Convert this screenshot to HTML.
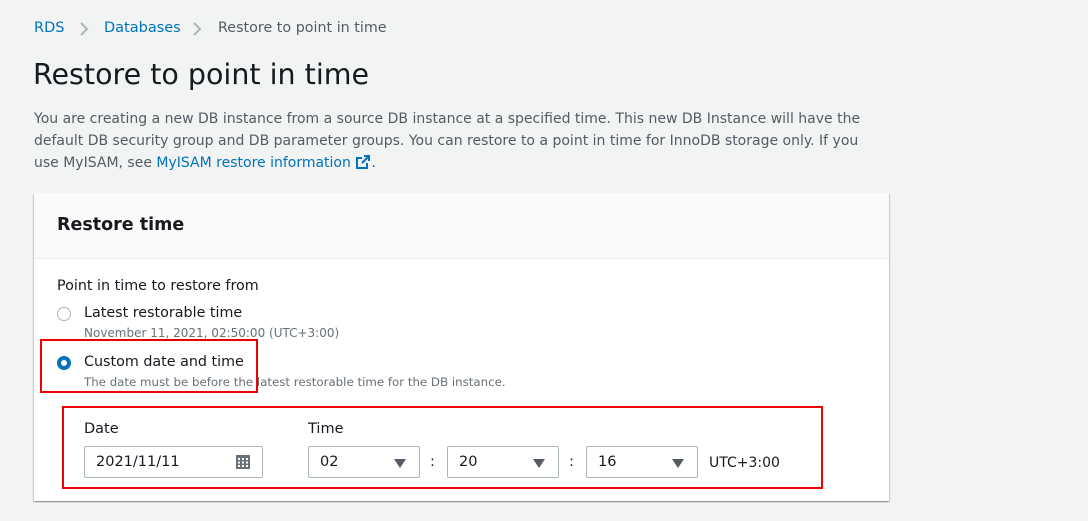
<!DOCTYPE html><html><head><style>
body{margin:0;background:#f2f3f3;font-family:"DejaVu Sans","Liberation Sans",sans-serif;color:#16191f;width:1088px;height:521px;overflow:hidden;position:relative}
.a{position:absolute;white-space:nowrap}
.l{color:#0073bb}
.card{position:absolute;left:34px;top:193px;width:855px;height:308px;background:#fff;box-shadow:0 1px 1px rgba(0,28,36,.3),1px 1px 1px rgba(0,28,36,.15),-1px 1px 1px rgba(0,28,36,.15)}
.hd{height:65px;background:#fafafa;border-bottom:1px solid #eaeded}
.sel{position:absolute;top:446px;height:32px;border:1px solid #aab7b8;border-radius:2px;background:#fff;box-sizing:border-box;font-size:14.5px;padding:7px 11px}
.tri{position:absolute;right:13px;top:12px;width:0;height:0;border-left:6px solid transparent;border-right:6px solid transparent;border-top:9px solid #545b64}
.red{position:absolute;border:2px solid #e00;box-sizing:border-box}
.chev{position:absolute;top:21px}
</style></head><body>
<div class="a l" style="left:34px;top:20px;font-size:14.5px">RDS</div>
<svg class="chev" style="left:79px" width="10" height="16" viewBox="0 0 10 16"><path d="M2 2l6 6-6 6" fill="none" stroke="#aab7b8" stroke-width="2"/></svg>
<div class="a l" style="left:104px;top:20px;font-size:14.5px">Databases</div>
<svg class="chev" style="left:192px" width="10" height="16" viewBox="0 0 10 16"><path d="M2 2l6 6-6 6" fill="none" stroke="#aab7b8" stroke-width="2"/></svg>
<div class="a" style="left:218px;top:20px;font-size:14.3px;color:#545b64">Restore to point in time</div>
<div class="a" style="left:33px;top:58px;font-size:28.5px">Restore to point in time</div>
<div class="a" style="left:34px;top:108px;font-size:14px;line-height:22px;color:#545b64;white-space:normal;width:845px">You are creating a new DB instance from a source DB instance at a specified time. This new DB Instance will have the default DB security group and DB parameter groups. You can restore to a point in time for InnoDB storage only. If you use MyISAM, see <span class="l">MyISAM restore information <svg width="16" height="16" viewBox="0 0 16 16" style="vertical-align:-3px"><path d="M9 2h5v5M14 2L7 9M12 9v5H2V4h5" fill="none" stroke="#0073bb" stroke-width="2"/></svg></span>.</div>
<div class="card"><div class="hd"><div class="a" style="left:23px;top:22px;font-size:17.5px;font-weight:bold">Restore time</div></div></div>
<div class="a" style="left:57px;top:278px;font-size:14.3px">Point in time to restore from</div>
<div class="a" style="left:57px;top:307px;width:12px;height:12px;border:1px solid #aab7b8;border-radius:50%"></div>
<div class="a" style="left:84px;top:305px;font-size:14.3px">Latest restorable time</div>
<div class="a" style="left:84px;top:326px;font-size:12px;color:#687078">November 11, 2021, 02:50:00 (UTC+3:00)</div>
<div class="a" style="left:57px;top:356px;width:6px;height:6px;border:4px solid #0073bb;border-radius:50%;background:#fff"></div>
<div class="a" style="left:84px;top:354px;font-size:14.3px">Custom date and time</div>
<div class="a" style="left:84px;top:375px;font-size:11.8px;color:#687078">The date must be before the latest restorable time for the DB instance.</div>
<div class="red" style="left:40px;top:339px;width:218px;height:54px"></div>
<div class="a" style="left:84px;top:421px;font-size:14.5px">Date</div>
<div class="a" style="left:308px;top:421px;font-size:14.5px">Time</div>
<div class="sel" style="left:84px;width:179px">2021/11/11<svg width="16" height="16" viewBox="0 0 16 16" style="position:absolute;right:11px;top:7px"><rect x="1" y="1" width="14" height="14" fill="#687078"/><g fill="#fff"><rect x="3" y="4" width="2" height="2"/><rect x="7" y="4" width="2" height="2"/><rect x="11" y="4" width="2" height="2"/><rect x="3" y="7.5" width="2" height="2"/><rect x="7" y="7.5" width="2" height="2"/><rect x="11" y="7.5" width="2" height="2"/><rect x="3" y="11" width="2" height="2"/><rect x="7" y="11" width="2" height="2"/><rect x="11" y="11" width="2" height="2"/></g></svg></div>
<div class="sel" style="left:308px;width:112px">02<div class="tri"></div></div>
<div class="a" style="left:430px;top:454px;font-size:14.5px">:</div>
<div class="sel" style="left:447px;width:112px">20<div class="tri"></div></div>
<div class="a" style="left:569px;top:454px;font-size:14.5px">:</div>
<div class="sel" style="left:586px;width:112px">16<div class="tri"></div></div>
<div class="a" style="left:709px;top:455px;font-size:14px">UTC+3:00</div>
<div class="red" style="left:62px;top:406px;width:761px;height:83px"></div>
</body></html>
